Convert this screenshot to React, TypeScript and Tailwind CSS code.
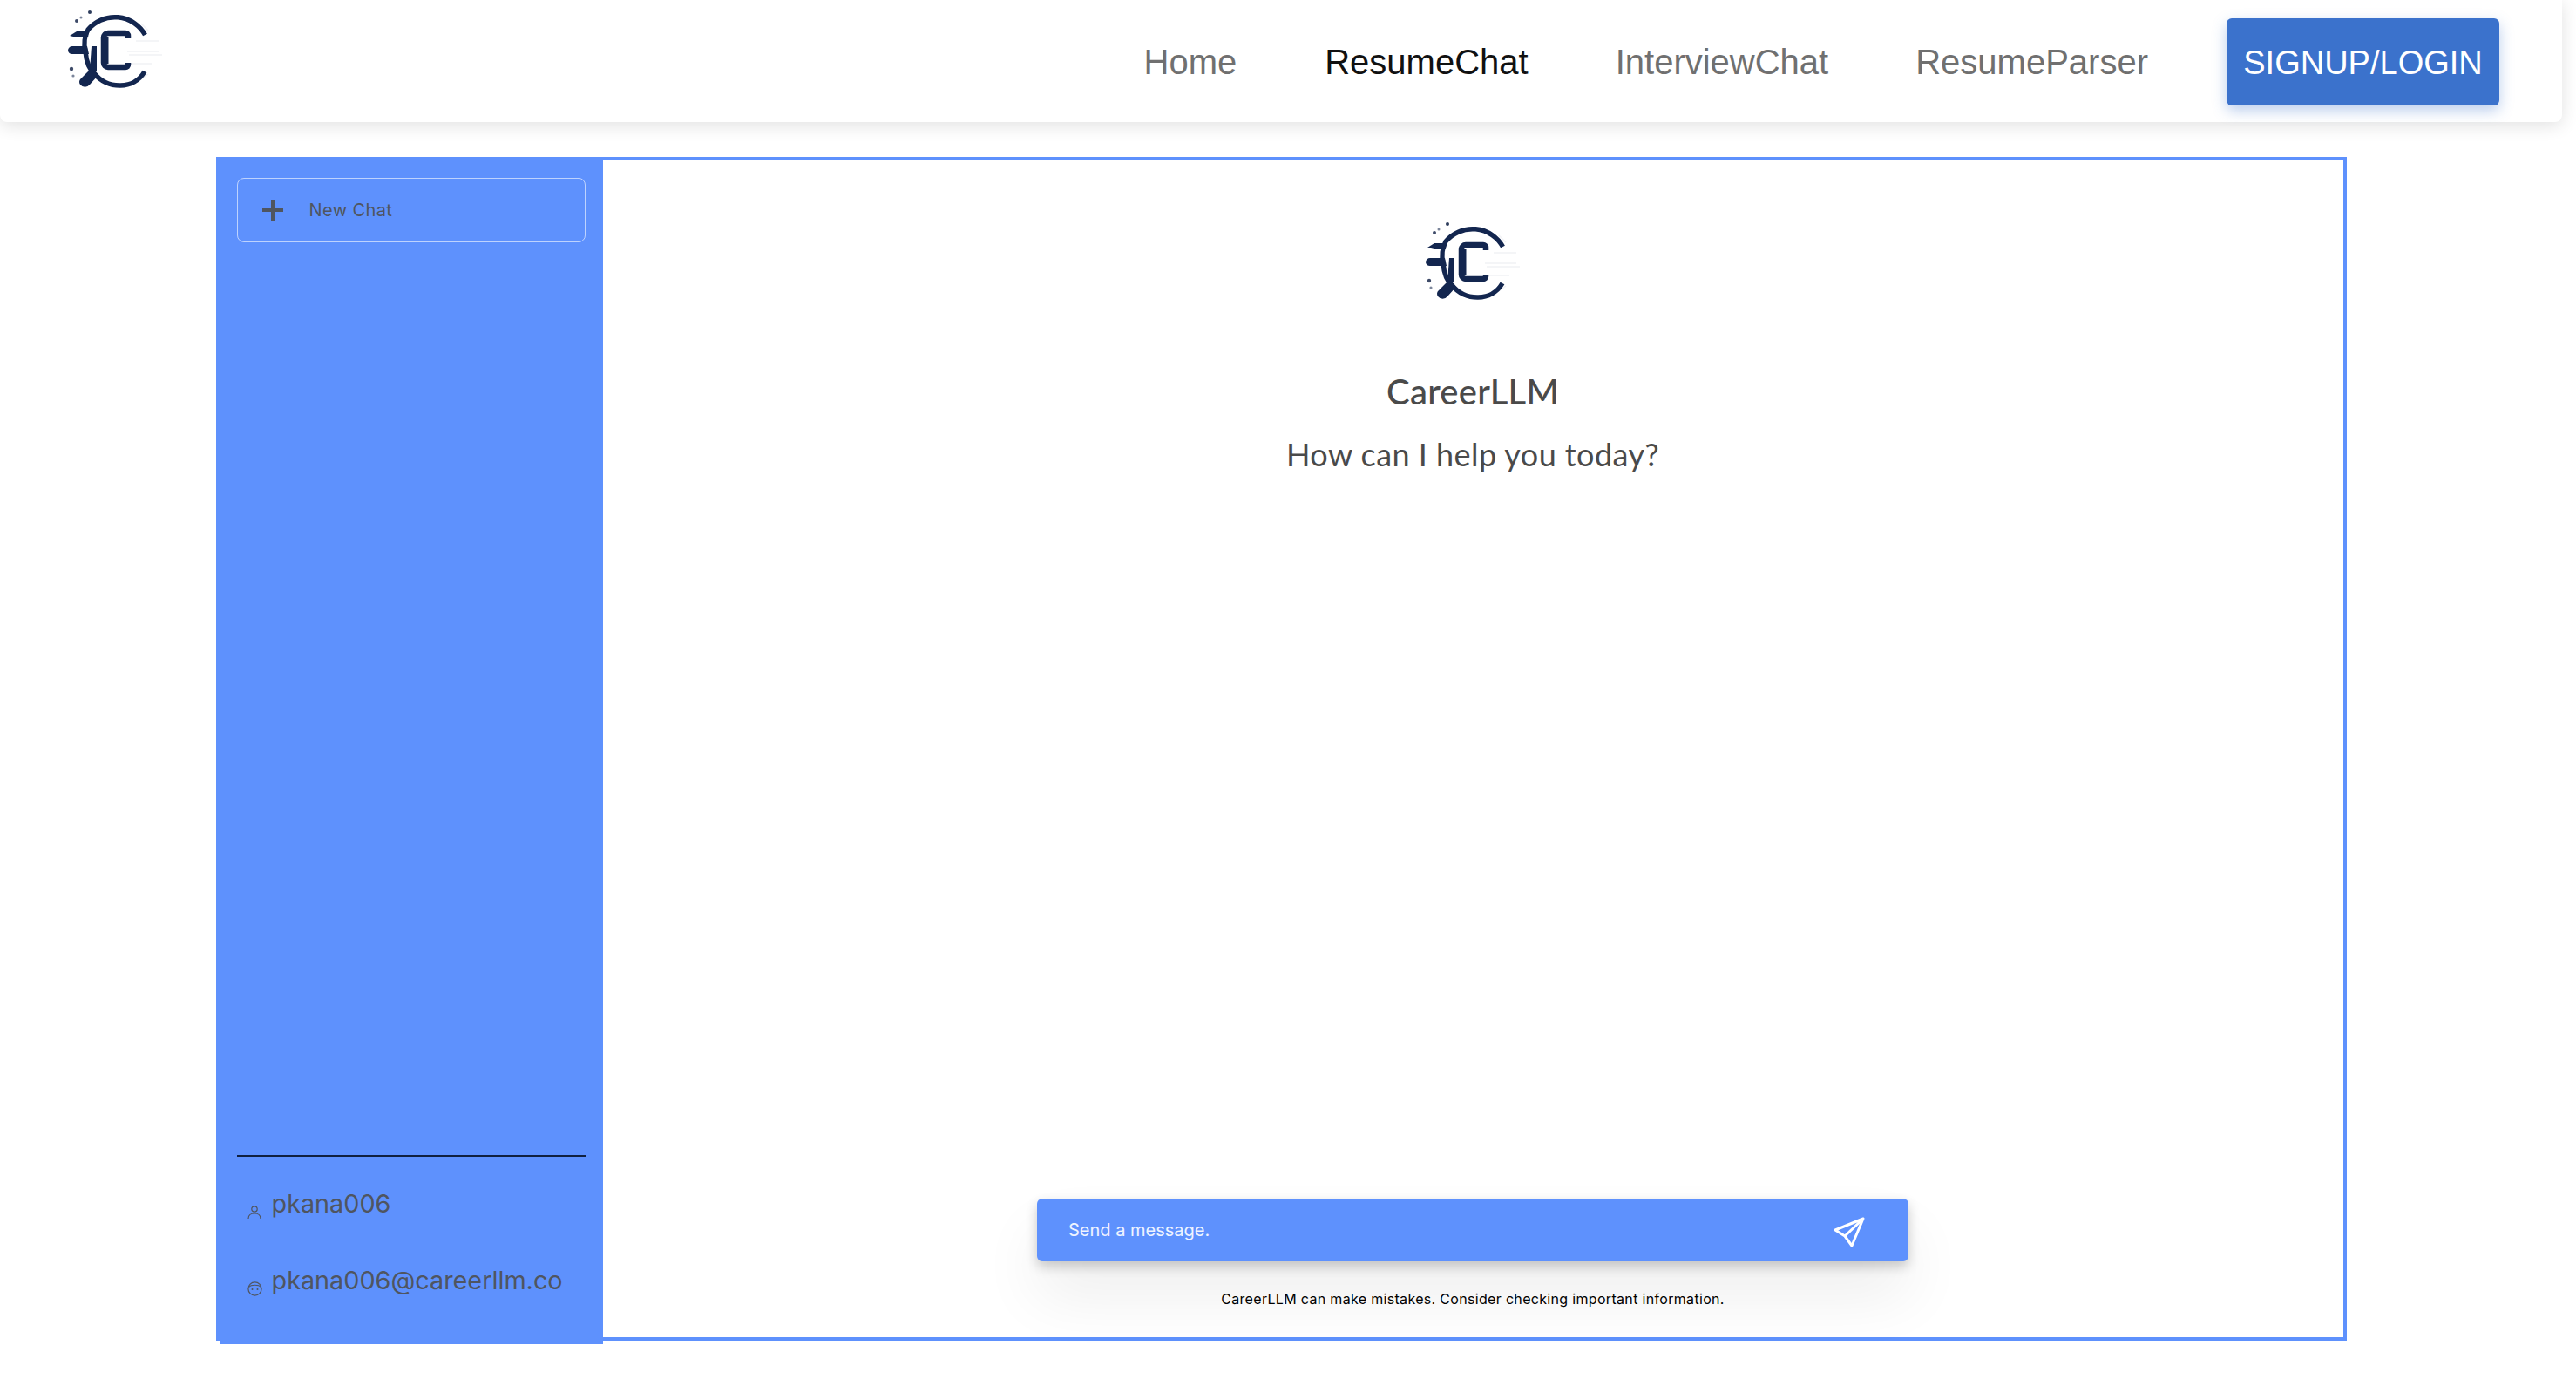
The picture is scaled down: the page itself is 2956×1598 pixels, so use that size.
const Logo = () => (
  <svg width="124" height="100" viewBox="0 0 124 100" fill="none" className="blur-[0.5px]">
    {/* faint speed lines on the right */}
    <g stroke="#f1f2f5" strokeWidth="1.5">
      <path d="M86 42h26M76 54h36M78 58h38M74 68h30M92 22l8 8M92 86l8-6" />
    </g>
    {/* outer ring */}
    <path d="M96.5 35A40 40 0 0 0 31 29C27 36 26 46 28 54C29 65 32 74 38 79C53 98 84 98 96 77" stroke="#13264f" strokeWidth="5.5" />
    {/* inner C */}
    <path d="M77 39V36a3 3 0 0 0-3-3H54a5 5 0 0 0-5 5V67a5 5 0 0 0 5 5H74a3 3 0 0 0 3-3V67" stroke="#13264f" strokeWidth="6.5" />
    <path d="M50.5 38v30" stroke="#13264f" strokeWidth="8" />
    {/* gear teeth */}
    <path d="M10 36L18 31H32L31 38H18Z" fill="#13264f" />
    <path d="M8 53a5 5 0 0 1 5-5H30L32 57H13a5 5 0 0 1-5-4Z" fill="#13264f" />
    <path d="M35 48L33 76H41V48Z" fill="#13264f" />
    <path d="M22 92a5 5 0 0 1 1-7L34 74L43 81L33 92a7 7 0 0 1-11 0Z" fill="#13264f" />
    {/* dots */}
    <circle cx="33" cy="9" r="2" fill="#2d3c5c" />
    <circle cx="23" cy="15" r="1.5" fill="#7c869b" />
    <circle cx="18" cy="19" r="2" fill="#3d4a68" />
    <circle cx="12" cy="74" r="2.2" fill="#3d4a68" />
    <circle cx="14" cy="82" r="1.6" fill="#7c869b" />
  </svg>
)

const UserIcon = () => (
  <svg width="16" height="17" viewBox="0 0 16 17" fill="none" stroke="#4f5560" strokeWidth="1.2">
    <circle cx="8" cy="5" r="3.2" />
    <path d="M1 16c0-4 3-6 7-6s7 2 7 6" />
  </svg>
)

const MailIcon = () => (
  <svg width="17" height="17" viewBox="0 0 17 17" fill="none" stroke="#4f5560" strokeWidth="1.2">
    <circle cx="8.5" cy="8.5" r="7.6" />
    <path d="M1.5 6.5C4 3.5 13 3.5 15.5 6.5" />
    <circle cx="5.5" cy="9" r="1" fill="#4f5560" stroke="none" />
    <circle cx="11.5" cy="9" r="1" fill="#4f5560" stroke="none" />
  </svg>
)

const SendIcon = () => (
  <svg width="36" height="36" viewBox="0 0 36 36" fill="none" stroke="white" strokeWidth="3" strokeLinejoin="round" className="mt-[5px]">
    <path d="M34 2L2 15L13 22L21 33Z" />
    <path d="M34 2L13 22" />
  </svg>
)

const App = () => {
  return (
    <div className="w-[2940px] h-[1598px] bg-white font-['Liberation_Sans',sans-serif]">
      {/* Navbar */}
      <nav className="h-[140px] flex justify-between bg-white rounded-b-lg shadow-[0_4px_20px_rgba(0,0,0,0.12)] pl-[70px] pr-[72px]">
        <div className="pt-[5px]">
          <Logo />
        </div>
        <div className="flex items-center pt-[2px]">
          <a className="text-[40px] text-[#707070] mr-[101px]">Home</a>
          <a className="text-[40px] text-[#111111] mr-[100px]">ResumeChat</a>
          <a className="text-[40px] text-[#707070] mr-[100px]">InterviewChat</a>
          <a className="text-[40px] text-[#707070] mr-[90px]">ResumeParser</a>
          <button className="w-[313px] h-[100px] pt-[2px] rounded-md bg-[#3b72cc] text-white text-[38px] shadow-[0_6px_16px_rgba(59,114,204,0.35)]">
            SIGNUP/LOGIN
          </button>
        </div>
      </nav>

      {/* Chat box */}
      <div className="mt-10 mx-auto w-[2445px] h-[1358px] border-4 border-[#5e91fd] flex font-['Inter',sans-serif]">
        <aside className="w-[440px] h-[1358px] shrink-0 bg-[#5e91fd] px-5 pt-5 flex flex-col text-[#4f5560]">
          <button className="h-[74px] w-[400px] flex items-center rounded-lg border border-white/60 pl-[28px]">
            <svg width="24" height="24" viewBox="0 0 24 24" stroke="#4f5560" strokeWidth="4">
              <path d="M12 0v24M0 12h24" />
            </svg>
            <span className="ml-[30px] text-[20px] tracking-[0.02em]">New Chat</span>
          </button>
          <div className="flex-1" />
          <div className="h-[217px] border-t-2 border-[#10203f] pl-3">
            <div className="flex items-start mt-[24px] h-[62px]">
              <span className="mt-[31px]"><UserIcon /></span>
              <span className="ml-[12px] text-[28.8px] leading-[60px]">pkana006</span>
            </div>
            <div className="flex items-start mt-[26px]">
              <span className="mt-[31px]"><MailIcon /></span>
              <span className="ml-[11px] text-[28.8px] leading-[60px]">pkana006@careerllm.co</span>
            </div>
          </div>
        </aside>

        <main className="flex-1 h-[1350px] flex flex-col items-center pt-16">
          <Logo />
          <h1 className="mt-[71px] text-[40px] leading-[60px] tracking-[0.25px] font-medium text-[#4a4a4a] font-['Lato',sans-serif]">CareerLLM</h1>
          <p className="mt-3 text-[36px] leading-[60px] tracking-[0.45px] text-[#4a4a4a] font-['Lato',sans-serif]">How can I help you today?</p>
          <div className="flex-1" />
          <div className="w-[1000px] pb-[33px]">
            <div className="h-[72px] flex items-center justify-between rounded-md bg-[#5e91fd] pl-9 pr-[50px] shadow-[0_6px_14px_rgba(0,0,0,0.2),0_40px_70px_rgba(0,0,0,0.07)]">
              <span className="text-[20px] text-white/90">Send a message.</span>
              <SendIcon />
            </div>
            <p className="mt-[32px] text-center text-[16px] leading-[22px] tracking-[0.02em] text-black">
              CareerLLM can make mistakes. Consider checking important information.
            </p>
          </div>
        </main>
      </div>
    </div>
  )
}

export default App
